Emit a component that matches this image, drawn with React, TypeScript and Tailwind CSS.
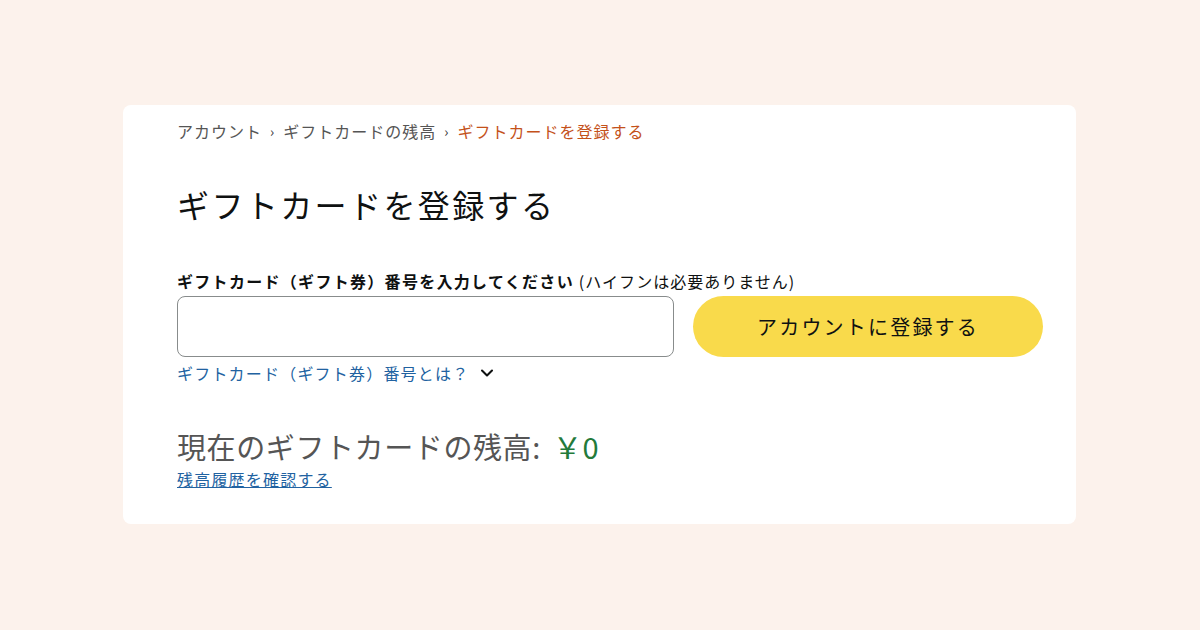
import { ChevronDown } from "lucide-react";

const jp = "font-['Noto_Sans_CJK_JP','Noto_Sans',sans-serif]";

export default function App() {
  return (
    <div className={`min-h-[630px] w-full bg-[#fcf2ec] pt-[105px] ${jp}`}>
      <div className="ml-[123px] w-[953px] h-[419px] rounded-lg bg-white pl-[54px] pt-[14px]">
        {/* breadcrumb */}
        <div className="flex items-center gap-[8px] text-[16px] leading-[24px] tracking-[1px] text-[#555]">
          <span>アカウント</span>
          <span className="text-[14px] text-[#333]">›</span>
          <span>ギフトカードの残高</span>
          <span className="text-[14px] text-[#333]">›</span>
          <span className="text-[#c4511a]">ギフトカードを登録する</span>
        </div>

        <h1 className="mt-[37px] text-[32px] leading-[48px] tracking-[2.4px] text-[#0f1111]">
          ギフトカードを登録する
        </h1>

        <div className="mt-[42px] text-[16px] leading-[22px] tracking-[1.3px] text-[#0f1111]">
          <span className="font-bold">ギフトカード（ギフト券）番号を入力してください</span>{" "}
          <span className="tracking-[1px]">(ハイフンは必要ありません)</span>
        </div>

        <div className="mt-[4px] flex items-center gap-[19px]">
          <input
            type="text"
            className="h-[61px] w-[497px] rounded-lg border border-[#888c8c] bg-white px-3 outline-none"
          />
          <button className="h-[61px] w-[350px] rounded-full bg-[#f9da4b] text-[20px] tracking-[2.2px] text-[#0f1111]">
            アカウントに登録する
          </button>
        </div>

        <div className="mt-[5px] flex items-center gap-[8px] text-[16px] leading-[22px] tracking-[1.2px] text-[#2162a1]">
          <span>ギフトカード（ギフト券）番号とは？</span>
          <ChevronDown className="h-5 w-5 text-[#0f1111]" strokeWidth={2.5} />
        </div>

        <div className="mt-[42px] flex items-baseline gap-[12px] text-[29px] leading-[40px] tracking-[0.6px]">
          <span className="text-[#555]">現在のギフトカードの残高:</span>
          <span className="text-[#237a3a]">￥0</span>
        </div>

        <a href="#" className="mt-[2px] block w-fit text-[16px] leading-[22px] tracking-[1.2px] text-[#2162a1] underline">
          残高履歴を確認する
        </a>
      </div>
    </div>
  );
}
